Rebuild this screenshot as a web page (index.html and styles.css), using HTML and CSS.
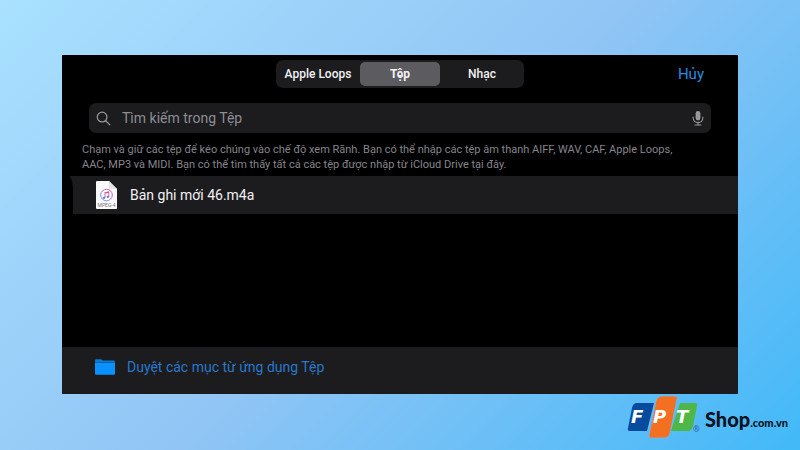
FILE: index.html
```html
<!DOCTYPE html>
<html lang="vi">
<head>
<meta charset="utf-8">
<meta name="viewport" content="width=device-width, initial-scale=1">
<title>Tệp</title>
<link rel="stylesheet" href="styles.css">
</head>
<body>
<main class="panel">
  <header class="topbar">
    <nav class="tabs">
      <button class="tab" type="button">Apple Loops</button>
      <button class="tab tab-active" type="button" aria-pressed="true">Tệp</button>
      <button class="tab" type="button">Nhạc</button>
    </nav>
    <button class="cancel" type="button">Hủy</button>
  </header>
  <div class="search">
    <label class="search-label" for="query" aria-label="Tìm kiếm">
      <svg class="icon-search" viewBox="0 0 16 16" aria-hidden="true"><circle cx="6.500" cy="6.500" r="5.200"/><path d="M10.400 10.400 14.800 14.800"/></svg>
    </label>
    <input class="search-input" id="query" type="text" placeholder="Tìm kiếm trong Tệp">
    <svg class="icon-mic" viewBox="0 0 12 16" aria-hidden="true"><rect class="mic-body" x="3.600" y="1" width="4.800" height="9.500" rx="2.400"/><path d="M1.200 7v1.100a4.800 4.500 0 0 0 9.600 0V7M6 12.600V15M3 15h6"/></svg>
  </div>
  <p class="hint">Chạm và giữ các tệp để kéo chúng vào chế độ xem Rãnh. Bạn có thể nhập các tệp âm thanh AIFF, WAV, CAF, Apple Loops, AAC, MP3 và MIDI. Bạn có thể tìm thấy tất cả các tệp được nhập từ iCloud Drive tại đây.</p>
  <ul class="files">
    <li class="file">
      <svg class="icon-file" viewBox="0 0 21 28" aria-hidden="true">
        <defs><linearGradient id="ring" x1="1" y1="0" x2="0" y2="1"><stop offset="0" stop-color="#f2558a"/><stop offset=".45" stop-color="#b56be0"/><stop offset="1" stop-color="#45b6f5"/></linearGradient>
        <linearGradient id="note" x1="0" y1="0" x2="0" y2="1"><stop offset="0" stop-color="#f24f83"/><stop offset="1" stop-color="#6a7bee"/></linearGradient></defs>
        <path d="M1 0h12l8 8v19a1 1 0 0 1-1 1H1a1 1 0 0 1-1-1V1a1 1 0 0 1 1-1Z" fill="#fafafa"/>
        <path d="M13 0v7a1 1 0 0 0 1 1h7Z" fill="#e4e4e7"/>
        <circle cx="10.500" cy="14" r="5.800" fill="#fff" stroke="url(#ring)"/>
        <path d="M8.500 11.200 13.300 10.200v5.600a1.400 1.100 0 1 1-.9-1V12l-3 .6v4.200a1.400 1.100 0 1 1-.9-1Z" fill="url(#note)"/>
        <text x="10.500" y="25.500" text-anchor="middle" class="file-type">MPEG-4</text>
      </svg>
      <span>Bản ghi mới 46.m4a</span>
    </li>
  </ul>
  <a class="browse" href="#">
    <svg class="icon-folder" viewBox="0 0 20 16" aria-hidden="true"><path d="M0 3.500V1.500A1.300 1.300 0 0 1 1.300.2h4.200c.8 0 1.200.3 1.700.8l.5.500h11A1.300 1.300 0 0 1 20 2.800v.7Z" fill="#087bd5"/><path d="M0 3.500h20v10.900a1.400 1.400 0 0 1-1.400 1.400H1.400A1.400 1.400 0 0 1 0 14.400Z" fill="#0a91ff"/><path d="M0 3.500h20" stroke="#125f9f" stroke-width=".8"/></svg>
    <span>Duyệt các mục từ ứng dụng Tệp</span>
  </a>
</main>
<footer class="brand">
  <svg class="logo" viewBox="0 0 74 44" role="img" aria-label="FPT">
    <path d="M10 8H27L20 36H3Q0 36 1 33L5 13Q6 8 10 8Z" fill="#064b9e"/>
    <path d="M53 8H68Q71 8 70 11L66 31Q65 36 61 36H44Z" fill="#4db748"/>
    <path d="M36 1H48Q51 1 50 4L43 38Q42 43 37 43H24Q21 43 22 40L29 6Q30 1 36 1Z" fill="#f36f21" stroke="#73bff0" stroke-width=".7"/>
    <g class="logo-letters"><text x="4" y="28">F</text><text x="26" y="28">P</text><text x="49" y="28">T</text></g>
    <text class="registered" x="66" y="37">®</text>
  </svg>
  <span class="shop">Shop</span><span class="domain">.com.vn</span>
</footer>
</body>
</html>
```

FILE: styles.css
```css
* { box-sizing: border-box; }
body {
  margin: 0;
  min-height: 100vh;
  padding: 55px 62px 0;
  display: flex;
  flex-direction: column;
  font-family: Roboto, "Noto Sans", sans-serif;
  background: linear-gradient(135deg, #a9e1ff 0%, #91c5f5 50%, #42b9f8 100%);
}
button { border: 0; background: none; font: inherit; padding: 0; }
.panel {
  flex: 1;
  display: flex;
  flex-direction: column;
  background: #000;
}
.topbar {
  display: grid;
  grid-template-columns: 1fr 248px 1fr;
  align-items: center;
  padding: 5px 34px 0;
}
.tabs {
  grid-column: 2;
  display: grid;
  grid-template-columns: repeat(3, 1fr);
  gap: 2px;
  padding: 2px;
  height: 28px;
  border-radius: 7px;
  background: #1c1c1e;
}
.tab { border-radius: 5px; font-size: 12px; font-weight: 500; color: #f2f2f4; }
.tab-active { background: #5b5b60; font-weight: 700; }
.cancel { justify-self: end; font-size: 15px; color: #2a8be0; }
.search {
  display: flex;
  align-items: center;
  margin: 15px 27px 0;
  padding: 0 7px;
  height: 30px;
  border-radius: 7px;
  background: #1c1c1e;
}
.search-label { display: flex; }
.icon-search { width: 15px; height: 15px; fill: none; stroke: #98989f; stroke-width: 1.3; stroke-linecap: round; }
.search-input {
  flex: 1;
  min-width: 0;
  margin: 0 11px;
  padding: 0;
  border: 0;
  outline: 0;
  background: none;
  font: inherit;
  font-size: 14px;
  color: #fff;
}
.search-input::placeholder { color: #8d8d94; opacity: 1; }
.icon-mic { width: 12px; height: 16px; fill: none; stroke: #98989f; stroke-width: 1.1; stroke-linecap: round; }
.mic-body { fill: #98989f; stroke: none; }
.hint {
  margin: 9px 50px 0 20px;
  font-size: 11px;
  line-height: 15px;
  color: #85858b;
}
.files { margin: 4px 0 0 8px; padding: 0; list-style: none; }
.file {
  display: flex;
  align-items: center;
  gap: 13px;
  height: 38px;
  padding-left: 26px;
  font-size: 14px;
  color: #f2f2f4;
  background: #1c1c1e;
  clip-path: polygon(0 0, 100% 0, 100% 100%, 3px 100%, 3px 12px, 2px 5px);
}
.icon-file { width: 21px; height: 28px; }
.file-type { font-size: 5px; fill: #77777c; }
.browse {
  display: flex;
  align-items: center;
  gap: 12px;
  margin-top: auto;
  height: 47px;
  padding: 0 33px 8px;
  font-size: 14px;
  color: #2878cc;
  text-decoration: none;
  background: #1c1c1e;
}
.icon-folder { width: 20px; height: 16px; }
.brand {
  display: flex;
  align-items: baseline;
  justify-content: flex-end;
  height: 56px;
  margin-right: -50px;
  font-family: Lato, sans-serif;
  font-weight: 900;
  color: #07121c;
}
.logo { width: 74px; height: 44px; margin: 1px 4px 0 0; align-self: flex-start; }
.logo-letters { font: italic 700 18px "DejaVu Sans", sans-serif; fill: #fff; }
.registered { font: 700 8px "Open Sans", sans-serif; fill: #2b68b5; }
.shop { font-size: 20px; line-height: 50px; }
.domain { font-size: 11px; }
```
